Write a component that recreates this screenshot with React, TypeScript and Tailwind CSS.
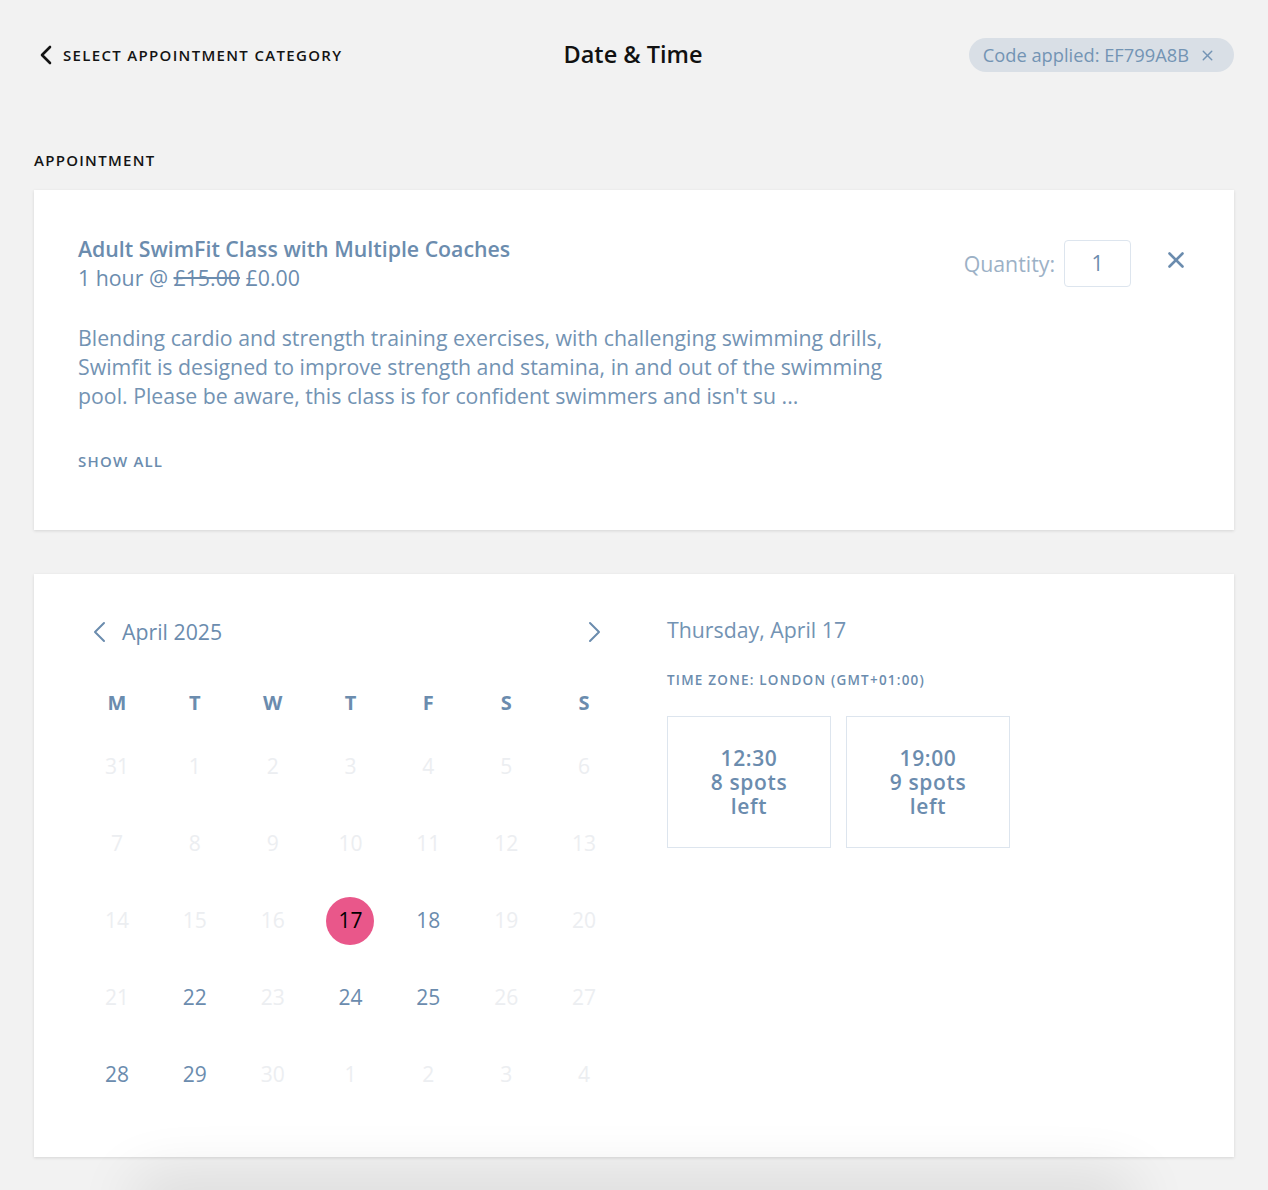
import { X } from 'lucide-react';

type Day = { n: number; on: boolean };

const font = { fontFamily: '"Open Sans", "Noto Sans", sans-serif' };

const weekdays = ['M', 'T', 'W', 'T', 'F', 'S', 'S'];

const open = [18, 22, 24, 25, 28, 29];

// April 2025, Monday-first, padded with the neighbouring months
const days: Day[] = [
  { n: 31, on: false },
  ...Array.from({ length: 30 }, (_, i) => ({ n: i + 1, on: open.includes(i + 1) })),
  ...[1, 2, 3, 4].map((n) => ({ n, on: false })),
];

const slots = [
  { time: '12:30', spots: 8 },
  { time: '19:00', spots: 9 },
];

function Chevron({ dir, className }: { dir: 'left' | 'right'; className?: string }) {
  const pts = dir === 'left' ? '11,2 2,11 11,20' : '2,2 11,11 2,20';
  return (
    <svg width="13" height="22" viewBox="0 0 13 22" fill="none" className={className}>
      <polyline points={pts} stroke="currentColor" strokeWidth="2" strokeLinecap="round" strokeLinejoin="round" />
    </svg>
  );
}

export default function App() {
  const selected = 17;

  return (
    <main className="min-h-screen bg-[#f2f2f2] px-[34px] pb-[34px]" style={font}>
      <header className="flex items-center justify-between pt-[38px] h-[72px]">
        <button type="button" className="flex items-center gap-[9px] pl-[4px] text-[#141414]">
          <svg width="16" height="20" viewBox="0 0 16 20" fill="none">
            <polyline points="12,2 4,10 12,18" stroke="currentColor" strokeWidth="2.6" strokeLinecap="round" strokeLinejoin="round" />
          </svg>
          <span className="text-[15px] font-semibold tracking-[0.088em]">SELECT APPOINTMENT CATEGORY</span>
        </button>
        <h1 className="text-[23.5px] font-semibold text-[#111] -ml-[45px]">Date &amp; Time</h1>
        <div className="flex items-center gap-[10px] h-[34px] rounded-full bg-[#d9dfe6] pl-[14px] pr-[18px] text-[18.3px] text-[#7394b4]">
          <span>Code applied: EF799A8B</span>
          <X size={17} strokeWidth={2} />
        </div>
      </header>

      <h2 className="mt-[78px] text-[15px] leading-[20px] font-semibold tracking-[0.085em] text-[#141414]">APPOINTMENT</h2>

      <section className="mt-[20px] bg-white shadow-[0_1px_3px_rgba(0,0,0,0.12)] pl-[44px] pr-[45px] pt-[44px] pb-[59px] flex justify-between">
        <div>
          <h3 className="text-[21.3px] leading-[29px] font-semibold text-[#6b8cae]">Adult SwimFit Class with Multiple Coaches</h3>
          <p className="text-[21.3px] leading-[29px] text-[#6b8cae]">
            1 hour @ <span className="line-through">£15.00</span> £0.00
          </p>
          <p className="mt-[31px] text-[21.3px] leading-[29px] text-[#7393b3] whitespace-nowrap">
            Blending cardio and strength training exercises, with challenging swimming drills,
            <br />
            Swimfit is designed to improve strength and stamina, in and out of the swimming
            <br />
            pool. Please be aware, this class is for confident swimmers and isn't su ...
          </p>
          <button type="button" className="mt-[41px] block text-[15px] leading-[20px] font-semibold tracking-[0.08em] text-[#6b8cae]">
            SHOW ALL
          </button>
        </div>
        <div className="flex items-start gap-[32px] pt-[8px]">
          <div className="flex items-center gap-[9px] -mt-[2px]">
            <span className="text-[21.3px] text-[#9cb1c6]">Quantity:</span>
            <div className="w-[67px] h-[47px] rounded-[4px] border border-[#dde5ee] flex items-center justify-center text-[21px] text-[#6b8cae]">1</div>
          </div>
          <X size={26} strokeWidth={2.4} className="text-[#6b8cae] mt-[5px]" />
        </div>
      </section>

      <section className="mt-[44px] bg-white shadow-[0_1px_3px_rgba(0,0,0,0.12)] pl-[44px] pt-[41px] pb-[44px] flex gap-[44px]">
        <div className="w-[545px] mt-[3px]">
          <div className="flex items-center justify-between pl-[15px] pr-[22px] h-[28px] text-[#6b8cae]">
            <div className="flex items-center gap-[16px]">
              <Chevron dir="left" />
              <span className="text-[21.3px]">April 2025</span>
            </div>
            <Chevron dir="right" />
          </div>
          <div className="mt-[32px] grid grid-cols-7 h-[50px] items-center text-center">
            {weekdays.map((d, i) => (
              <span key={i} className="text-[20px] font-bold text-[#6b8cae]">{d}</span>
            ))}
          </div>
          <div className="grid grid-cols-7">
            {days.map((d, i) => (
              <div key={i} className="h-[77px] flex items-center justify-center">
                {d.n === selected && i > 0 && i < 31 ? (
                  <span className="w-[48px] h-[48px] rounded-full bg-[#e9578a] text-black text-[21px] flex items-center justify-center">{d.n}</span>
                ) : (
                  <span className={d.on ? 'text-[21px] text-[#6b8cae]' : 'text-[21px] text-[#eceef1]'}>{d.n}</span>
                )}
              </div>
            ))}
          </div>
        </div>

        <div>
          <p className="text-[21.3px] leading-[30px] text-[#7393b3]">Thursday, April 17</p>
          <p className="mt-[26px] text-[13.5px] leading-[18px] font-semibold tracking-[0.09em] text-[#6b8cae]">TIME ZONE: LONDON (GMT+01:00)</p>
          <div className="mt-[27px] flex gap-[15px]">
            {slots.map((s) => (
              <button
                key={s.time}
                type="button"
                className="w-[164px] h-[132px] border border-[#dde5ee] flex flex-col items-center justify-center text-[21px] leading-[24px] font-semibold text-[#6b8cae] tracking-[0.03em]"
              >
                <span>{s.time}</span>
                <span>{s.spots} spots</span>
                <span>left</span>
              </button>
            ))}
          </div>
        </div>
      </section>

      <div className="fixed left-[130px] right-[130px] bottom-[-50px] h-[50px] rounded-full shadow-[0_-12px_60px_rgba(0,0,0,0.11)] pointer-events-none" />
    </main>
  );
}
